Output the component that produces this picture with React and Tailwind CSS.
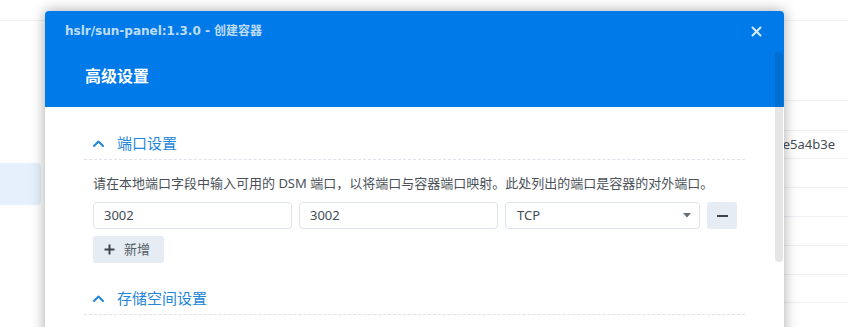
import React from "react";

const font = { fontFamily: '"Noto Sans", "Noto Sans CJK SC", sans-serif' };

function Chevron() {
  return (
    <svg width="11" height="7" viewBox="0 0 11 7" className="shrink-0">
      <path d="M1 6 L5.5 1.5 L10 6" fill="none" stroke="#1f86d9" strokeWidth="2" strokeLinecap="round" strokeLinejoin="round" />
    </svg>
  );
}

function SectionHeader({ title }) {
  return (
    <div className="flex h-[33px] items-center border-b border-dashed border-[#dde2e8] pl-[9px]">
      <Chevron />
      <span className="ml-[13px] text-[15px] text-[#1f86d9]">{title}</span>
    </div>
  );
}

export default function App() {
  const rowHeights = [30, 28, 29, 29, 29, 29, 28];
  return (
    <div className="relative h-[327px] w-[848px] overflow-hidden bg-white" style={font}>
      {/* background page */}
      <div className="flex h-full flex-col">
        <div className="h-[21px] border-b border-[#eef1f4]" />
        <div className="flex flex-1">
          <div className="w-[45px] shrink-0 pt-[142px]">
            <div className="mr-[4px] h-[42px] rounded-r-[4px] bg-[#e5f0fc]" />
          </div>
          <div className="flex flex-1 flex-col">
            <div className="h-[80px] border-b border-[#eceff3]" />
            {rowHeights.map((h, i) => (
              <div
                key={i}
                className="flex items-center justify-end border-b border-[#eceff3] pr-[13px] text-[13px] text-[#444c55]"
                style={{ height: h }}
              >
                {i === 1 ? "sha256:91c0d3f8c2ce5a4b3e" : ""}
              </div>
            ))}
          </div>
        </div>
      </div>

      {/* modal */}
      <div className="absolute left-[45px] top-[11px] h-[400px] w-[739px] overflow-hidden rounded-t-[4px] bg-white shadow-[0_0_14px_rgba(0,0,0,0.35)]">
        <div className="relative h-[96px] bg-[#007ae8] px-[20px]">
          <div className="flex h-[40px] items-center justify-between">
            <span
              className="text-[12px] font-bold text-white/75"
              style={{ fontFamily: '"DejaVu Sans", "Noto Sans CJK SC", sans-serif' }}
            >
              hslr/sun-panel:1.3.0 - 创建容器
            </span>
            <svg width="11" height="11" viewBox="0 0 11 11" className="mr-[2px]">
              <path d="M1.5 1.5 L9.5 9.5 M9.5 1.5 L1.5 9.5" stroke="rgba(255,255,255,0.85)" strokeWidth="2" strokeLinecap="round" />
            </svg>
          </div>
          <div className="mt-[13px] pl-[20px] text-[16px] font-semibold leading-[24px] text-white">高级设置</div>
        </div>

        <div className="px-[39px] pt-[20px]">
          <SectionHeader title="端口设置" />
          <div className="pl-[9px]">
            <div className="mt-[13px] text-[13px] leading-[20px] text-[#4a5159]">
              请在本地端口字段中输入可用的 DSM 端口，以将端口与容器端口映射。此处列出的端口是容器的对外端口。
            </div>
            <div className="mt-[9px] flex h-[27px] gap-[7px] pr-[7px]">
              <div className="flex w-[199px] items-center rounded-[4px] border-[1.5px] border-[#dfe4ea] pl-[10px] text-[13px] text-[#444c55]">3002</div>
              <div className="flex w-[199px] items-center rounded-[4px] border-[1.5px] border-[#dfe4ea] pl-[10px] text-[13px] text-[#444c55]">3002</div>
              <div className="flex w-[195px] items-center justify-between rounded-[4px] border-[1.5px] border-[#dfe4ea] pl-[11px] pr-[8px] text-[13px] text-[#444c55]">
                <span>TCP</span>
                <svg width="8" height="5" viewBox="0 0 8 5">
                  <path d="M0 0 L8 0 L4 4.5 Z" fill="#666d75" />
                </svg>
              </div>
              <div className="flex w-[30px] items-center justify-center rounded-[3px] bg-[#e6ecf3]">
                <div className="h-[2px] w-[11px] bg-[#3d444b]" />
              </div>
            </div>
            <div className="mt-[7px] flex h-[27px] w-[71px] items-center rounded-[3px] bg-[#e6ecf3] pl-[11px]">
              <svg width="11" height="11" viewBox="0 0 11 11">
                <path d="M5.5 0.5 V10.5 M0.5 5.5 H10.5" stroke="#3d444b" strokeWidth="2" />
              </svg>
              <span className="ml-[9px] text-[13px] text-[#555c63]">新增</span>
            </div>
          </div>
          <div className="mt-[19px]">
            <SectionHeader title="存储空间设置" />
          </div>
        </div>

        {/* scrollbar */}
        <div className="absolute left-[730px] top-[41px] h-[210px] w-[8px] rounded-full bg-black/10" />
      </div>
    </div>
  );
}
